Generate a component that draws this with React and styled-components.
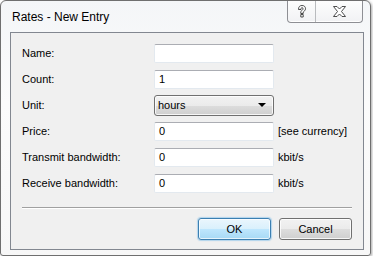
import React from "react";
import styled, { createGlobalStyle } from "styled-components";

const GlobalStyle = createGlobalStyle`
  body {
    margin: 0;
    background: #ffffff;
  }
`;

const fields = [
  { label: "Name:", value: "", unit: "" },
  { label: "Count:", value: "1", unit: "" },
  { label: "Unit:", value: "hours", select: true },
  { label: "Price:", value: "0", unit: "[see currency]" },
  { label: "Transmit bandwidth:", value: "0", unit: "kbit/s" },
  { label: "Receive bandwidth:", value: "0", unit: "kbit/s" },
];

const HelpIcon = () => (
  <svg width="10" height="13" viewBox="0 0 10 13">
    <path
      d="M1.5 4.5 C1.5 1.5 3 0.5 5 0.5 C7.5 0.5 8.5 2 8.5 3.8 C8.5 5.5 7 6.3 6.2 7 L6.2 8.5 L3.8 8.5 L3.8 6.5 C4.5 5.6 6 5.2 6 3.8 C6 3 5.6 2.6 5 2.6 C4.3 2.6 4 3.2 4 4.5 Z M3.8 9.5 L6.2 9.5 L6.2 12 L3.8 12 Z"
      fill="#ffffff"
      stroke="#3a3a3a"
      strokeWidth="0.9"
      strokeLinejoin="round"
    />
  </svg>
);

const CloseIcon = () => (
  <svg width="13" height="11" viewBox="0 0 13 11">
    <path
      d="M0.5 0.5 L4 0.5 L6.5 3 L9 0.5 L12.5 0.5 L8.5 5.5 L12.5 10.5 L9 10.5 L6.5 8 L4 10.5 L0.5 10.5 L4.5 5.5 Z"
      fill="#ffffff"
      stroke="#3a3a3a"
      strokeWidth="0.9"
      strokeLinejoin="round"
    />
  </svg>
);

const App = () => {
  return (
    <>
      <GlobalStyle />
      <Window>
        <TitleBar>
          <Title>Rates - New Entry</Title>
          <Caption>
            <CaptionButton width="27px">
              <HelpIcon />
            </CaptionButton>
            <CaptionButton width="46px">
              <CloseIcon />
            </CaptionButton>
          </Caption>
        </TitleBar>
        <Client>
          <Form>
            {fields.map((f) => (
              <Row key={f.label}>
                <Label>{f.label}</Label>
                {f.select ? (
                  <Select>
                    <span>{f.value}</span>
                    <Arrow />
                  </Select>
                ) : (
                  <Input>{f.value}</Input>
                )}
                <Unit>{f.unit}</Unit>
              </Row>
            ))}
          </Form>
          <Separator />
          <Buttons>
            <Button primary>OK</Button>
            <Button>Cancel</Button>
          </Buttons>
        </Client>
      </Window>
    </>
  );
};

const Window = styled.div`
  box-sizing: border-box;
  width: 371px;
  height: 256px;
  border: 1px solid #6f6f6f;
  border-radius: 6px 6px 3px 3px;
  background: linear-gradient(to bottom, #f4f6f8 0%, #fbfbfb 40%, #f7f7f7 100%);
  box-shadow: 1px 1px 3px rgba(0, 0, 0, 0.35);
  padding: 0 6px 5px 9px;
  display: flex;
  flex-direction: column;
  font-family: "Liberation Sans", Arial, sans-serif;
`;

const TitleBar = styled.div`
  height: 31px;
  display: flex;
  justify-content: space-between;
  align-items: flex-start;
`;

const Title = styled.div`
  margin: 9px 0 0 2px;
  font-size: 12px;
  color: #000;
`;

const Caption = styled.div`
  display: flex;
  height: 21px;
  border: 1px solid #8e8f94;
  border-top: none;
  border-radius: 0 0 4px 4px;
  background: linear-gradient(to bottom, #fdfdfd, #f1f2f4);
  margin-right: 1px;
  box-shadow: inset 0 -1px 0 #ffffff;
`;

const CaptionButton = styled.div`
  width: ${(p) => p.width};
  display: flex;
  align-items: center;
  justify-content: center;
  & + & {
    border-left: 1px solid #b9bbbe;
  }
`;

const Client = styled.div`
  flex: 1;
  border: 1px solid #828790;
  background: #f0f0f0;
  padding: 7px 11px 0 11px;
  font-family: Tahoma, "Liberation Sans", Arial, sans-serif;
  font-size: 11px;
  color: #000;
`;

const Form = styled.div`
  display: flex;
  flex-direction: column;
`;

const Row = styled.div`
  height: 26px;
  display: grid;
  grid-template-columns: 128px 120px auto;
  column-gap: 4px;
  align-items: center;
`;

const Label = styled.div`
  white-space: nowrap;
`;

const Input = styled.div`
  box-sizing: border-box;
  height: 19px;
  background: #fff;
  border: 1px solid #e3e9ef;
  border-top-color: #abadb3;
  border-radius: 2px;
  padding: 0 4px;
  display: flex;
  align-items: center;
`;

const Select = styled.div`
  box-sizing: border-box;
  height: 21px;
  border: 1px solid #707070;
  border-radius: 3px;
  background: linear-gradient(to bottom, #f2f2f2 0%, #ebebeb 50%, #dddddd 51%, #cfcfcf 100%);
  box-shadow: inset 0 0 0 1px rgba(255, 255, 255, 0.8);
  display: flex;
  align-items: center;
  justify-content: space-between;
  padding: 0 7px 0 3px;
`;

const Arrow = styled.span`
  width: 0;
  height: 0;
  border-left: 4px solid transparent;
  border-right: 4px solid transparent;
  border-top: 4px solid #000;
`;

const Unit = styled.div`
  white-space: nowrap;
`;

const Separator = styled.div`
  margin-top: 11px;
  height: 1px;
  background: #a0a0a0;
  border-bottom: 1px solid #ffffff;
`;

const Buttons = styled.div`
  margin-top: 9px;
  display: flex;
  justify-content: flex-end;
  gap: 8px;
`;

const Button = styled.div`
  box-sizing: border-box;
  width: 73px;
  height: 22px;
  border-radius: 3px;
  display: flex;
  align-items: center;
  justify-content: center;
  border: 1px solid ${(p) => (p.primary ? "#3c7fb1" : "#707070")};
  background: ${(p) =>
    p.primary
      ? "linear-gradient(to bottom, #eaf6fd 0%, #d9f0fc 50%, #bee6fd 51%, #a7d9f5 100%)"
      : "linear-gradient(to bottom, #f2f2f2 0%, #ebebeb 50%, #dddddd 51%, #cfcfcf 100%)"};
  box-shadow: ${(p) =>
    p.primary
      ? "inset 0 0 0 1px rgba(255,255,255,0.7), 0 0 1px 1px rgba(60,160,230,0.35)"
      : "inset 0 0 0 1px rgba(255,255,255,0.8)"};
`;

export default App;
